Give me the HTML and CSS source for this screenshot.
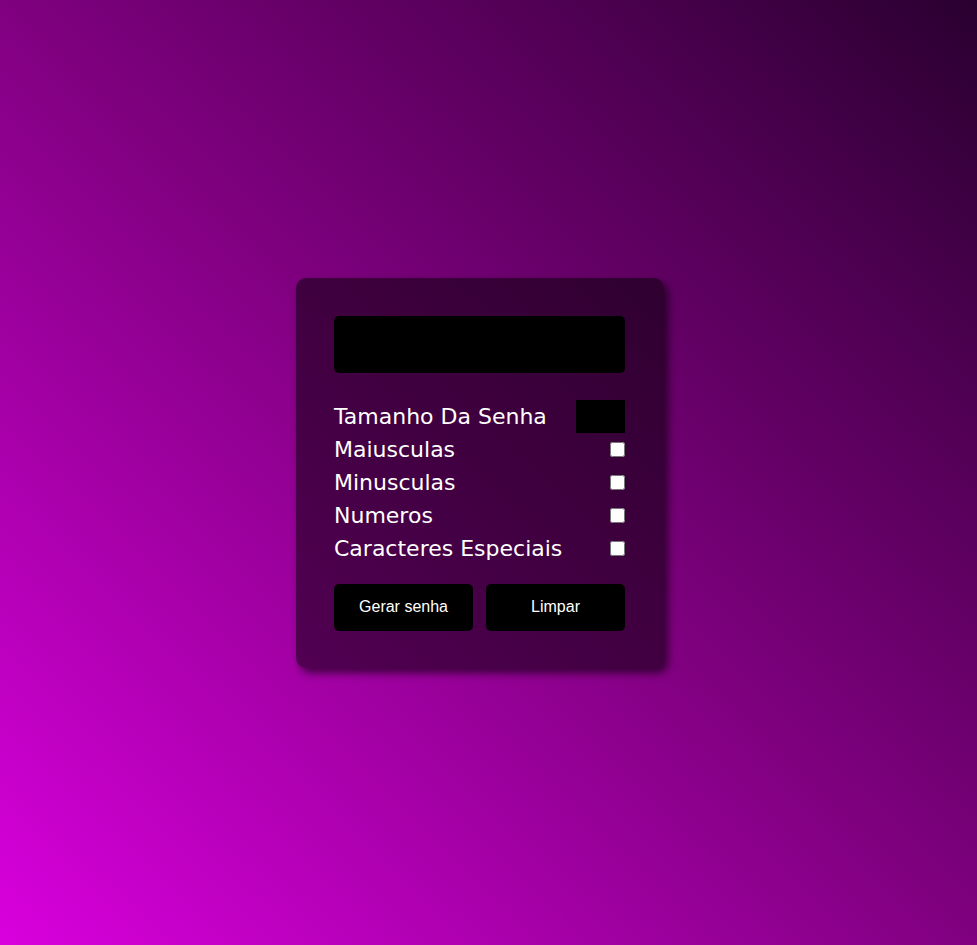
FILE: index.html
```html
<!DOCTYPE html>
<html lang="pt-BR">
<head>
<meta charset="utf-8">
<title>Gerador de Senha</title>
<link rel="stylesheet" href="styles.css">
</head>
<body>
<main class="page">
  <section class="card">
    <input class="output" type="text" readonly>
    <div class="options">
      <label class="row">
        <span>Tamanho Da Senha</span>
        <input class="size" type="number">
      </label>
      <label class="row">
        <span>Maiusculas</span>
        <input class="check" type="checkbox">
      </label>
      <label class="row">
        <span>Minusculas</span>
        <input class="check" type="checkbox">
      </label>
      <label class="row">
        <span>Numeros</span>
        <input class="check" type="checkbox">
      </label>
      <label class="row">
        <span>Caracteres Especiais</span>
        <input class="check" type="checkbox">
      </label>
    </div>
    <div class="actions">
      <button class="btn" type="button">Gerar senha</button>
      <button class="btn" type="button">Limpar</button>
    </div>
  </section>
</main>
</body>
</html>
```
FILE: styles.css
```css
* { box-sizing: border-box; }
html, body {
  margin: 0;
  height: 100%;
}
body {
  background: linear-gradient(to top right, #d900dd 0%, #800080 50%, #2a0030 100%);
  font-family: "DejaVu Sans", sans-serif;
}
.page {
  min-height: 100vh;
  display: flex;
  align-items: center;
  justify-content: center;
  padding-right: 17px;
}
.card {
  width: 368px;
  padding: 38px 39px 37px 38px;
  background: rgba(0, 0, 0, 0.5);
  border-radius: 10px;
  box-shadow: 4px 5px 8px rgba(0, 0, 0, 0.6);
  display: flex;
  flex-direction: column;
}
.output {
  height: 57px;
  width: 100%;
  background: #000;
  border: none;
  border-radius: 5px;
  outline: none;
  color: #fff;
}
.options {
  margin-top: 27px;
  display: flex;
  flex-direction: column;
}
.row {
  height: 33px;
  display: flex;
  align-items: center;
  justify-content: space-between;
  color: #fff;
  font-size: 22px;
}
.size {
  width: 49px;
  height: 33px;
  background: #000;
  border: none;
  outline: none;
  color: #fff;
}
.check {
  width: 15px;
  height: 15px;
  margin: 0;
}
.actions {
  margin-top: 19px;
  display: flex;
  gap: 13px;
}
.btn {
  flex: 1;
  height: 47px;
  background: #000;
  color: #fff;
  border: none;
  border-radius: 5px;
  font-family: "Liberation Sans", Arial, sans-serif;
  font-size: 16px;
}
```
